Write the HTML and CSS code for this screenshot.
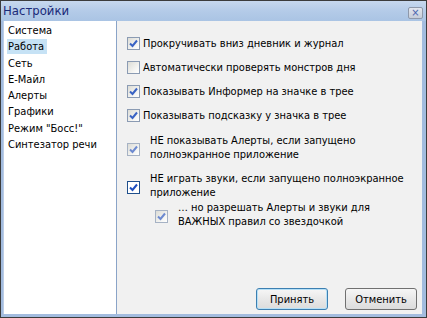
FILE: index.html
```html
<!DOCTYPE html>
<html lang="ru">
<head>
    <meta charset="UTF-8">
    <title>Настройки</title>
    <link rel="stylesheet" href="styles.css">
</head>
<body>
    <div class="window">
        <div class="titlebar">
            <span class="title">Настройки</span>
            <span class="close-btn">&times;</span>
        </div>
        <div class="frame">
            <ul class="menu">
                <li>Система</li>
                <li><span class="selected">Работа</span></li>
                <li>Сеть</li>
                <li>Е-Майл</li>
                <li>Алерты</li>
                <li>Графики</li>
                <li>Режим "Босс!"</li>
                <li>Синтезатор речи</li>
            </ul>
            <div class="panel">
                <div class="options">
                    <label class="option">
                        <span class="box checked"><svg viewBox="0 0 9 9"><path d="M1 4.5 3.5 7 8 1.5"/></svg></span>
                        <span>Прокручивать вниз дневник и журнал</span>
                    </label>
                    <label class="option">
                        <span class="box"></span>
                        <span>Автоматически проверять монстров дня</span>
                    </label>
                    <label class="option">
                        <span class="box checked"><svg viewBox="0 0 9 9"><path d="M1 4.5 3.5 7 8 1.5"/></svg></span>
                        <span>Показывать Информер на значке в трее</span>
                    </label>
                    <label class="option">
                        <span class="box checked"><svg viewBox="0 0 9 9"><path d="M1 4.5 3.5 7 8 1.5"/></svg></span>
                        <span>Показывать подсказку у значка в трее</span>
                    </label>

                    <label class="option wide first">
                        <span class="box checked dim"><svg viewBox="0 0 9 9"><path d="M1 4.5 3.5 7 8 1.5"/></svg></span>
                        <span>НЕ показывать Алерты, если запущено<br>полноэкранное приложение</span>
                    </label>
                    <label class="option wide">
                        <span class="box checked focus"><svg viewBox="0 0 9 9"><path d="M1 4.5 3.5 7 8 1.5"/></svg></span>
                        <span>НЕ играть звуки, если запущено полноэкранное<br>приложение</span>
                    </label>
                    <label class="option wide sub">
                        <span class="box checked dim"><svg viewBox="0 0 9 9"><path d="M1 4.5 3.5 7 8 1.5"/></svg></span>
                        <span>… но разрешать Алерты и звуки для<br>ВАЖНЫХ правил со звездочкой</span>
                    </label>
                </div>
                <div class="buttons">
                    <button class="btn default">Принять</button>
                    <button class="btn">Отменить</button>
                </div>
            </div>
        </div>
    </div>
</body>
</html>
```

FILE: styles.css
```css
* {
    margin: 0;
    padding: 0;
    box-sizing: border-box;
}

body {
    font-family: 'DejaVu Sans Condensed', 'Liberation Sans', Arial, sans-serif;
    font-size: 11px;
    color: #000;
    background: #fff;
}

.window {
    width: 427px;
    height: 318px;
    border: 1px solid #3c3c3c;
    background: #a3bcdf;
    display: flex;
    flex-direction: column;
}

.titlebar {
    height: 20px;
    display: flex;
    align-items: center;
    justify-content: space-between;
    padding: 0 3px 0 2px;
    background: linear-gradient(to bottom, #c7d8ee 0%, #b4cbe8 50%, #aac4e4 100%);
}

.title {
    font-size: 13px;
    color: #1b2a78;
    line-height: 20px;
}

.close-btn {
    width: 15px;
    height: 12px;
    margin-top: 4px;
    border: 1px solid #8e98aa;
    border-radius: 2px;
    background: linear-gradient(to bottom, #e2e6ee, #c6cdd9);
    color: #4a64b0;
    font-size: 11px;
    line-height: 9px;
    text-align: center;
}

.frame {
    flex: 1;
    display: flex;
    padding: 0 4px 3px 2px;
}

.menu {
    width: 114px;
    list-style: none;
    background: #fff;
    border-left: 1px solid #bccde6;
    border-right: 1px solid #8aa4c8;
    padding: 2px 0 0 4px;
}

.menu li {
    height: 16.3px;
    line-height: 16px;
    white-space: nowrap;
}

.selected {
    background: #c6e2f5;
    padding: 1px 3px 1px 1px;
    margin-left: -1px;
}

.panel {
    flex: 1;
    background: #f1f1f1;
    display: flex;
    flex-direction: column;
    justify-content: space-between;
    padding: 10px 5px 4px 10px;
}

.options {
    display: flex;
    flex-direction: column;
}

.option {
    display: flex;
    align-items: center;
    gap: 3px;
    height: 24px;
    white-space: nowrap;
}

.option.wide {
    gap: 10px;
    height: 28px;
    line-height: 14px;
    margin-top: 10px;
}

.option.wide .box {
    margin-top: 2px;
}

.option.first {
    margin-top: 7px;
}

.option.sub {
    margin-top: 1px;
    padding-left: 28px;
}

.box {
    width: 13px;
    height: 13px;
    flex: none;
    border: 1px solid #8b9bb3;
    background: linear-gradient(135deg, #dcdcd6 0%, #f6f6f4 70%, #fff 100%);
    display: flex;
    align-items: center;
    justify-content: center;
}

.box svg {
    width: 9px;
    height: 9px;
    fill: none;
    stroke: #3a63c4;
    stroke-width: 2;
}

.box.dim {
    border-color: #a6b2c4;
}

.box.dim svg {
    stroke: #6d8ad0;
}

.box.focus {
    border-color: #1f4f8c;
    background: #fff;
}

.box.focus svg {
    stroke: #1d4ec0;
}

.buttons {
    display: flex;
    justify-content: flex-end;
    gap: 17px;
}

.btn {
    width: 72px;
    height: 22px;
    font-family: inherit;
    font-size: 11px;
    color: #000;
    border: 1px solid #707070;
    border-radius: 3px;
    background: linear-gradient(to bottom, #f6f6f6 0%, #e8e8e8 50%, #dcdcdc 100%);
}

.btn.default {
    border-color: #3c7fb1;
    box-shadow: inset 0 0 0 1px #b6e0f7;
}
```
